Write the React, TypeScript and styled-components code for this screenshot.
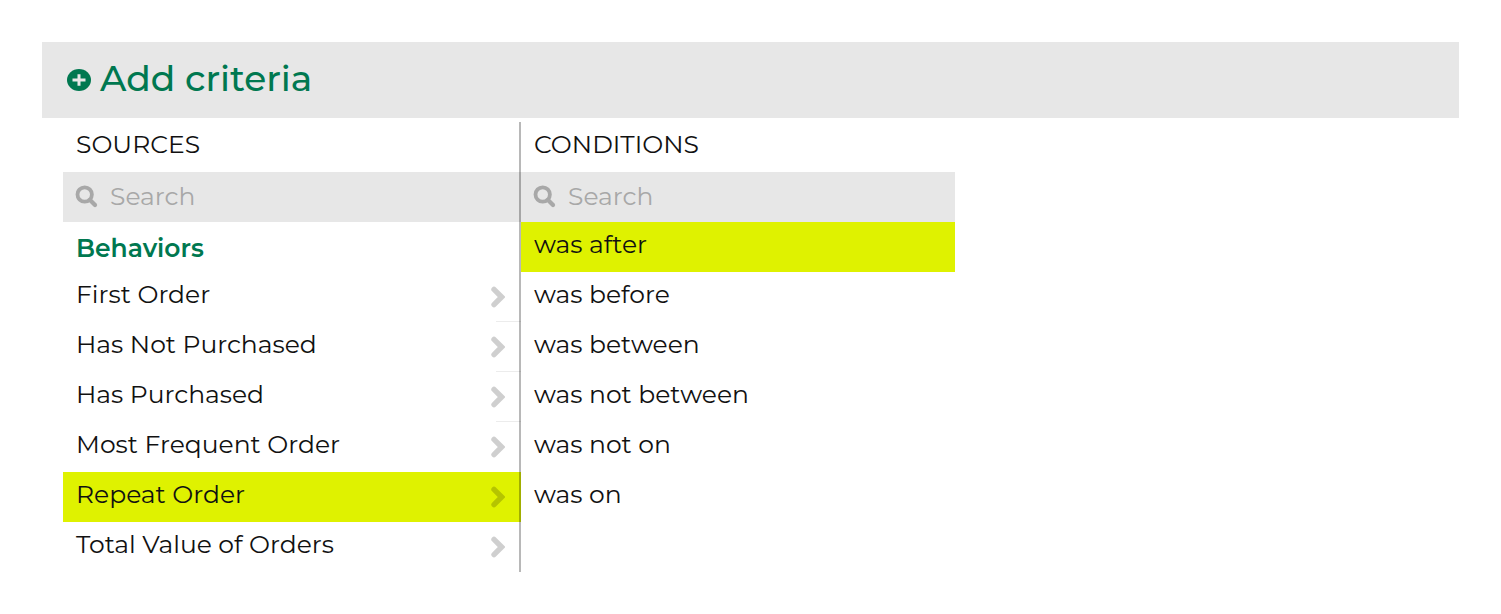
import React, { useState } from "react";
import styled, { createGlobalStyle } from "styled-components";

const GlobalStyle = createGlobalStyle`
  * { box-sizing: border-box; }
  body {
    margin: 0;
    background: #fff;
    color: #111;
    font-family: Montserrat, Inter, "Liberation Sans", sans-serif;
    font-size: 25px;
    line-height: 30px;
  }
  button, input { font: inherit; color: inherit; border: 0; margin: 0; border-radius: 0; }
`;

const Page = styled.main`
  padding: 42px;
`;

const Header = styled.header`
  display: flex;
  align-items: center;
  height: 76px;
  padding: 0 25px 4px;
  background: #e7e7e7;
`;

const AddButton = styled.button`
  display: flex;
  align-items: center;
  gap: 9px;
  padding: 0;
  background: none;
  color: #007850;
  font-size: 36px;
  line-height: 44px;
  font-weight: 500;
  cursor: pointer;

  svg { margin-top: 4px; }
`;

const Columns = styled.div`
  display: grid;
  grid-template-columns: minmax(0, 458fr) minmax(0, 434fr) minmax(0, 504fr);
  margin-left: 21px;
  padding-top: 4px;
`;

const Column = styled.section<{ $divided?: boolean }>`
  position: relative;

  &::after {
    content: "";
    display: ${(p) => (p.$divided ? "block" : "none")};
    position: absolute;
    top: 0;
    bottom: 0;
    right: 0;
    width: 2px;
    background: rgba(0, 0, 0, 0.28);
  }
`;

const Title = styled.h2`
  margin: 0;
  padding: 7px 13px 13px;
  font-size: 25px;
  font-weight: 400;
`;

const SearchBox = styled.label`
  display: flex;
  align-items: center;
  gap: 12px;
  height: 50px;
  padding: 0 12px 2px;
  background: #e7e7e7;
  color: #a8a8a8;
`;

const SearchInput = styled.input`
  flex: 1;
  min-width: 0;
  padding: 0;
  background: none;
  outline: none;
  color: #111;
  font-weight: 400;

  &::placeholder { color: #a8a8a8; opacity: 1; }
`;

const Group = styled.h3`
  margin: 0;
  padding: 11px 13px 9px;
  color: #007850;
  font-size: 25px;
  font-weight: 600;
`;

const List = styled.ul`
  margin: 0;
  padding: 0;
  list-style: none;
`;

const Option = styled.button<{ $selected: boolean; $ruled?: boolean }>`
  position: relative;
  display: flex;
  align-items: center;
  justify-content: space-between;
  width: 100%;
  height: 50px;
  padding: 0 16px 6px 13px;
  background: ${(p) => (p.$selected ? "#dff200" : "#fff")};
  font-weight: 400;
  text-align: left;
  cursor: pointer;

  svg { margin-top: 5px; }

  &::after {
    content: "";
    display: ${(p) => (p.$ruled ? "block" : "none")};
    position: absolute;
    right: 0;
    bottom: 0;
    width: 25px;
    height: 1px;
    background: #ececec;
  }
`;

const PlusIcon = () => (
  <svg width="24" height="22" viewBox="0 0 24 22" aria-hidden="true">
    <ellipse cx="12" cy="11" rx="12" ry="11" fill="currentColor" />
    <path d="M12 5.2v11.6M5.5 11h13" stroke="#e7e7e7" strokeWidth="3" />
  </svg>
);

const SearchIcon = () => (
  <svg width="23" height="23" viewBox="0 0 23 23" fill="none" stroke="currentColor" aria-hidden="true">
    <circle cx="9.7" cy="9.5" r="7.2" strokeWidth="3.8" />
    <path d="M15 15l5 5" strokeWidth="4.2" strokeLinecap="round" />
  </svg>
);

const Chevron = () => (
  <svg width="14" height="22" viewBox="0 0 14 22" fill="none" aria-hidden="true">
    <path d="M3 3.4L10.6 11L3 18.6" stroke="#000" strokeOpacity="0.19" strokeWidth="5.4" strokeLinecap="round" />
  </svg>
);

const sources = ["First Order", "Has Not Purchased", "Has Purchased", "Most Frequent Order", "Repeat Order", "Total Value of Orders"];
const conditions = ["was after", "was before", "was between", "was not between", "was not on", "was on"];

const Search = ({ label }: { label: string }) => (
  <SearchBox>
    <SearchIcon />
    <SearchInput type="text" placeholder="Search" aria-label={label} />
  </SearchBox>
);

export default function App() {
  const [source, setSource] = useState("Repeat Order");
  const [condition, setCondition] = useState("was after");

  return (
    <Page>
      <GlobalStyle />
      <Header>
        <AddButton type="button">
          <PlusIcon />
          Add criteria
        </AddButton>
      </Header>
      <Columns>
        <Column $divided>
          <Title>SOURCES</Title>
          <Search label="Search sources" />
          <Group>Behaviors</Group>
          <List>
            {sources.map((name, i) => (
              <li key={name}>
                <Option type="button" $selected={name === source} $ruled={i < 3} onClick={() => setSource(name)}>
                  {name}
                  <Chevron />
                </Option>
              </li>
            ))}
          </List>
        </Column>
        <Column>
          <Title>CONDITIONS</Title>
          <Search label="Search conditions" />
          <List>
            {conditions.map((name) => (
              <li key={name}>
                <Option type="button" $selected={name === condition} onClick={() => setCondition(name)}>
                  {name}
                </Option>
              </li>
            ))}
          </List>
        </Column>
      </Columns>
    </Page>
  );
}
